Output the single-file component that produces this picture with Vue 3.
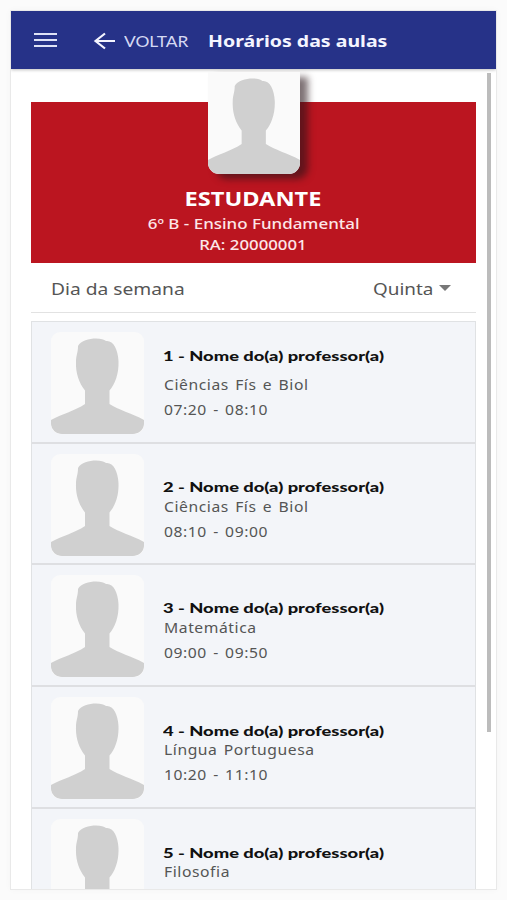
<template>
  <div class="page">
    <div class="phone">
      <header class="topbar">
        <button class="menu" aria-label="Menu">
          <span></span>
          <span></span>
          <span></span>
        </button>
        <button class="back">
          <svg class="arrow" viewBox="0 0 22 18" fill="none" stroke="currentColor">
            <path d="M11.500 1.500L2 9l9.500 7.500M1.500 9H21.500" stroke-width="2.200"/>
          </svg>
          <span class="wide">VOLTAR</span>
        </button>
        <h1 class="title"><span class="wide">Horários das aulas</span></h1>
      </header>

      <main class="content">
        <section class="student">
          <div class="photo">
            <svg viewBox="0 0 93 102" preserveAspectRatio="none">
              <path :d="silhouette" fill="#d0d0d0"/>
            </svg>
          </div>
          <h2 class="student-name"><span class="wide">ESTUDANTE</span></h2>
          <p class="student-class"><span class="wide">6º B - Ensino Fundamental</span></p>
          <p class="student-ra"><span class="wide">RA: 20000001</span></p>
        </section>

        <div class="weekday">
          <span class="wide day-label">Dia da semana</span>
          <div class="select">
            <span class="wide day-value">{{ day }}</span>
            <i class="caret"></i>
          </div>
        </div>

        <ul class="lessons">
          <li v-for="lesson in lessons" :key="lesson.id" class="lesson">
            <svg class="avatar" viewBox="0 0 93 102" preserveAspectRatio="none">
              <path :d="silhouette" fill="#d0d0d0"/>
            </svg>
            <div class="info">
              <h3><span class="wide">{{ lesson.id }} - Nome do(a) professor(a)</span></h3>
              <p class="subject"><span class="wide">{{ lesson.subject }}</span></p>
              <p v-if="lesson.time" class="time"><span class="wide">{{ lesson.time }}</span></p>
            </div>
          </li>
        </ul>
      </main>
      <div class="scrollbar"></div>
    </div>
  </div>
</template>

<script setup>
import { ref } from "vue";

const day = ref("Quinta");

const lessons = [
  { id: 1, subject: "Ciências Fís e Biol", time: "07:20 - 08:10" },
  { id: 2, subject: "Ciências Fís e Biol", time: "08:10 - 09:00" },
  { id: 3, subject: "Matemática", time: "09:00 - 09:50" },
  { id: 4, subject: "Língua Portuguesa", time: "10:20 - 11:10" },
  { id: 5, subject: "Filosofia" }
];

const silhouette =
  "M27 14C30 8.500 38 6.500 45 6.500C50 6.500 53 7.500 55 9C62 8 67 17 67.500 29C68 42 64 52 58.500 58.500V72C67 78 81 81 93 88V92C93 98 87 102 82 102H11C5 102 0 97 0 92V88C10 82 24 79 34 72V58.500C28 51 24.500 41 25 30C25 23 27 21 27 14Z";
</script>

<style>
body {
  margin: 0;
  overflow: hidden;
  background: #fbfbfb;
}
</style>

<style scoped>
.page {
  height: 900px;
  box-sizing: border-box;
  padding: 11px 11px 10px;
  font-family: "Noto Sans", "Open Sans", sans-serif;
}
.phone {
  position: relative;
  display: flex;
  flex-direction: column;
  width: 485px;
  height: 878px;
  overflow: hidden;
  background: #fff;
  box-shadow: 0 0 0 1px #e9e9e9, 0 0 8px rgba(0, 0, 0, 0.04);
}
h1, h2, h3, p, ul {
  margin: 0;
  padding: 0;
}
button {
  border: none;
  padding: 0;
  background: transparent;
  color: inherit;
  font: inherit;
}
.wide {
  display: inline-block;
  white-space: nowrap;
  transform-origin: left center;
}

/* Top bar */
.topbar {
  display: flex;
  align-items: center;
  flex: none;
  height: 58px;
  box-sizing: border-box;
  padding: 2px 0 0 23px;
  background: #263288;
  color: #f4f5ff;
  box-shadow: 0 1px 3px rgba(0, 0, 0, 0.25);
}
.menu {
  display: flex;
  flex-direction: column;
  gap: 4px;
  width: 23px;
  margin-top: -2px;
}
.menu span {
  height: 2px;
  background: #dfe2f6;
}
.back {
  display: flex;
  align-items: center;
  width: 115px;
  margin: -1px 0 0 36px;
  font-family: Lato, sans-serif;
  font-size: 15px;
}
.arrow {
  width: 23px;
  height: 18px;
  margin-right: 8px;
}
.back .wide {
  padding-top: 1px;
  color: #d5d9f3;
  transform: scaleX(1.16);
}
.title {
  font-size: 16px;
  line-height: 24px;
}
.title .wide {
  transform: scaleX(1.22);
}

/* Student card */
.content {
  flex: 1;
  min-height: 0;
  padding: 33px 20px 0;
}
.student {
  display: flex;
  flex-direction: column;
  align-items: center;
  height: 161px;
  background: #bb1520;
  color: #fff;
}
.student .wide {
  transform-origin: center;
}
.photo {
  flex: none;
  width: 92px;
  height: 102px;
  margin-top: -30px;
  overflow: hidden;
  border-radius: 0 0 11px 11px;
  background: #fafafa;
  box-shadow: 8px 5px 7px rgba(40, 20, 25, 0.6);
}
.photo svg {
  display: block;
  width: 92px;
  height: 102px;
}
.student-name {
  margin: 12px 2px 0 0;
  font-size: 20px;
  line-height: 26px;
}
.student-name .wide {
  transform: scaleX(1.18);
}
.student-class, .student-ra {
  font-size: 15px;
  font-weight: 500;
  line-height: 21px;
  color: #fde6e8;
}
.student-class {
  margin-top: 1px;
}
.student-ra {
  margin-right: 2px;
}
.student-class .wide {
  transform: scaleX(1.13);
}
.student-ra .wide {
  transform: scaleX(1.12);
}

/* Weekday picker */
.weekday {
  display: flex;
  align-items: center;
  justify-content: space-between;
  height: 49px;
  padding: 0 25px 0 20px;
  border-bottom: 1px solid #e2e2e2;
  color: #555;
  font-size: 17px;
}
.select {
  display: flex;
  align-items: center;
}
.day-label, .day-value {
  padding-top: 2px;
}
.day-label {
  transform: scaleX(1.13);
}
.day-value {
  width: 66px;
  transform: scaleX(1.11);
}
.caret {
  border: 6px solid transparent;
  border-top-color: #777;
  border-bottom: 0;
}

/* Lessons */
.lessons {
  margin-top: 8px;
  list-style: none;
  border: 1px solid #e0e2e4;
}
.lesson {
  display: flex;
  height: 121.700px;
  box-sizing: border-box;
  padding: 10px 0 0 19px;
  border-bottom: 2px solid #dedfe2;
  background: #f3f5f9;
}
.avatar {
  flex: none;
  width: 93px;
  height: 102px;
  border-radius: 9px;
  background: #fafafa;
}
.info {
  padding: 23px 0 0 19px;
  color: #555;
  font-size: 14px;
}
.lesson:first-child .info {
  padding-top: 14px;
}
.info h3 {
  height: 20px;
  color: #111;
  font-family: Lato, sans-serif;
  font-size: 13px;
  font-weight: 900;
  line-height: 20px;
}
.lesson:nth-child(n + 4) h3 {
  height: 19px;
  padding-top: 1px;
}
.info p {
  padding-left: 1px;
  line-height: 20px;
}
.lesson:first-child .subject {
  margin-top: 9px;
}
.time {
  margin-top: 5px;
}
.info h3 .wide {
  transform: scaleX(1.41);
}
.info p .wide {
  letter-spacing: 0.5px;
  word-spacing: 1.5px;
  transform: scaleX(1.12);
}

.scrollbar {
  position: absolute;
  top: 62px;
  right: 5px;
  width: 4px;
  height: 659px;
  background: #bcbcbc;
}
</style>
